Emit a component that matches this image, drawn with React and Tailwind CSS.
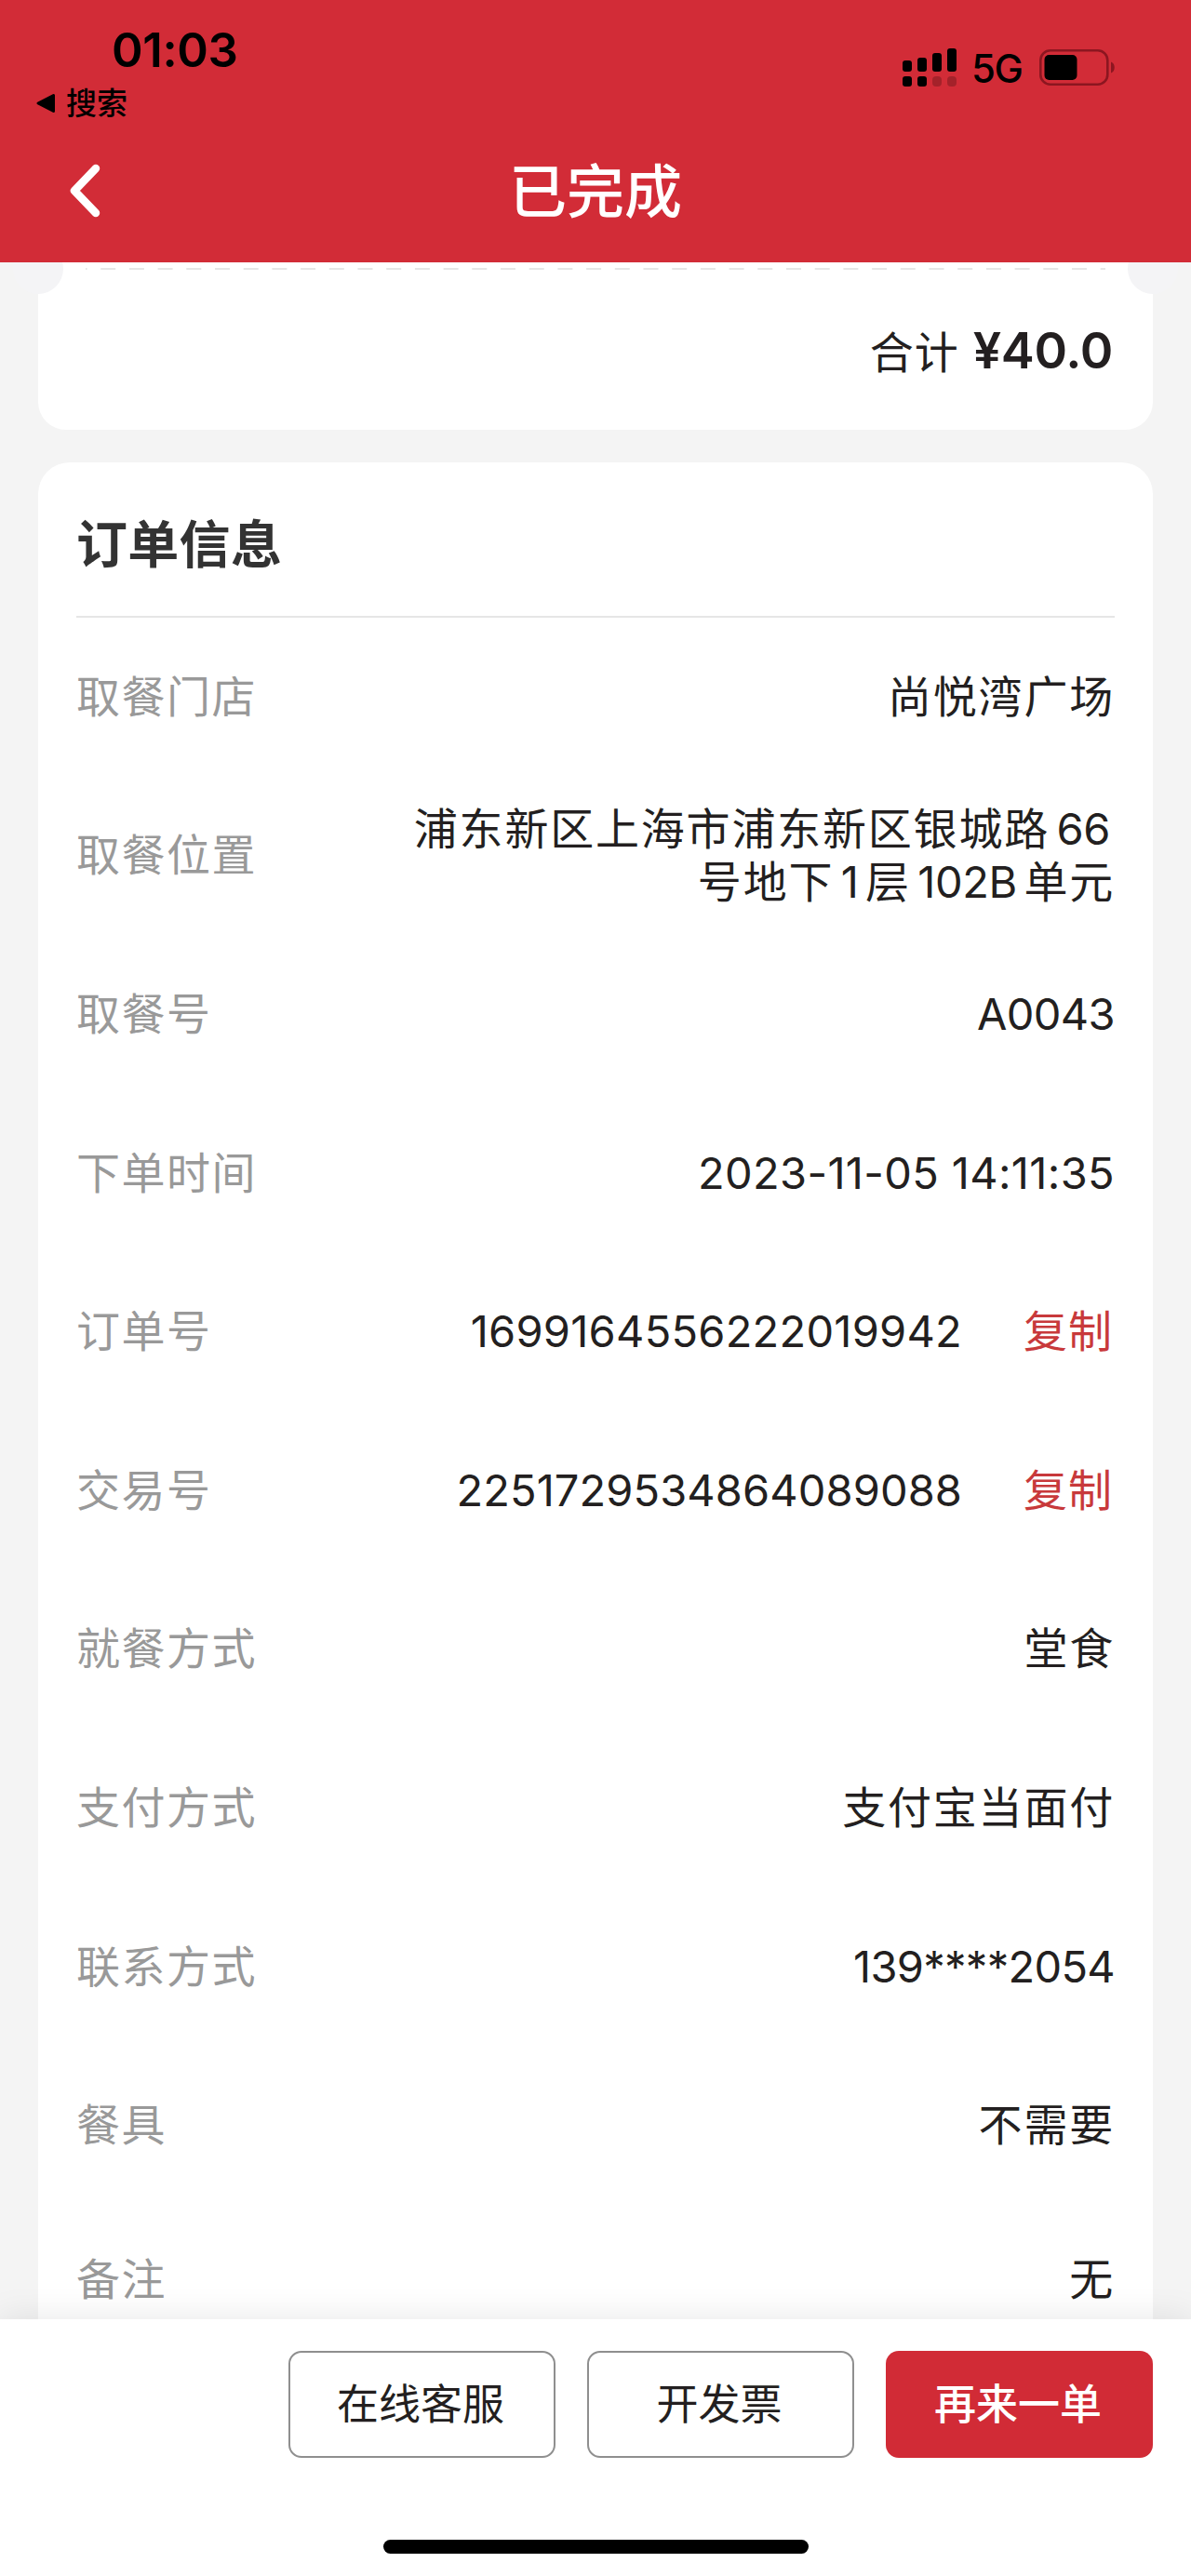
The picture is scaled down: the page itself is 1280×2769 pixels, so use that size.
import React from 'react';
import clsx from 'clsx';

const ORDER_ROWS = [
    { label: '取餐门店', value: '尚悦湾广场' },
    { label: '取餐位置', lines: [['浦东新区上海市浦东新区银城路', '66'], ['号地下', '1', '层', '102B', '单元']] },
    { label: '取餐号', value: 'A0043', tracking: 'tracking-[-0.6px]' },
    { label: '下单时间', value: '2023-11-05 14:11:35', tracking: 'tracking-[0.35px]' },
    { label: '订单号', value: '1699164556222019942', tracking: 'tracking-[0.25px]', copy: true },
    { label: '交易号', value: '2251729534864089088', tracking: 'tracking-[0.1px]', copy: true },
    { label: '就餐方式', value: '堂食' },
    { label: '支付方式', value: '支付宝当面付' },
    { label: '联系方式', value: '139****2054', tracking: 'tracking-[-0.7px]' },
    { label: '餐具', value: '不需要' },
    { label: '备注', value: '无' },
];

const isLatin = (text) => /^[\x20-\x7e]+$/.test(text);

function SignalIcon() {
    return (
        <svg width="58" height="41" viewBox="0 0 58 41" className="block">
            <rect x="0" y="13" width="10" height="12" rx="3" />
            <rect x="16" y="10" width="10" height="15" rx="3" />
            <rect x="32" y="5" width="10" height="20" rx="3" />
            <rect x="48" y="0" width="10" height="25" rx="3" />
            <rect x="0" y="30" width="10" height="11" rx="3" />
            <rect x="16" y="30" width="10" height="11" rx="3" />
            <rect x="32" y="30" width="10" height="11" rx="4" opacity="0.22" />
            <rect x="48" y="30" width="10" height="11" rx="4" opacity="0.22" />
        </svg>
    );
}

function BatteryIcon() {
    return (
        <svg width="82" height="39" viewBox="0 0 82 39" className="block">
            <rect x="1.3" y="1.3" width="72" height="36.4" rx="10.5" fill="none" stroke="#8c1620" strokeWidth="2.6" />
            <rect x="5.5" y="6" width="35" height="27" rx="5" />
            <path d="M77 13.5c5 1.5 5 10.5 0 12z" fill="#8c1620" />
        </svg>
    );
}

function Header() {
    return (
        <header className="h-[282px] shrink-0 bg-[#d22c37] text-black">
            <div className="flex h-[140px] justify-between pl-[38px] pr-[81px]">
                <div className="pt-[23px]">
                    <div className="pl-[82px] text-[51px] leading-[62px] font-semibold tracking-[-0.4px]">01:03</div>
                    <div className="mt-[5px] flex items-center gap-[11px]">
                        <svg width="22" height="22" viewBox="0 0 22 22">
                            <path d="M3 11 19.5 2.5v17z" stroke="#000" strokeWidth="3" strokeLinejoin="round" />
                        </svg>
                        <span className="text-[33px] leading-[42px] font-medium">搜索</span>
                    </div>
                </div>
                <div className="flex h-[41px] items-center mt-[52px]">
                    <SignalIcon />
                    <span className="ml-[16px] w-[73px] text-[42px] leading-[41px] font-medium tracking-[-1.5px] pt-[2px]">5G</span>
                    <BatteryIcon />
                </div>
            </div>
            <div className="grid h-[130px] grid-cols-[1fr_auto_1fr] items-center px-[74px] text-white">
                <svg width="36" height="58" viewBox="0 0 36 58" fill="none">
                    <path d="M29 5 6 29l23 24" stroke="currentColor" strokeWidth="8.5" strokeLinecap="round" strokeLinejoin="round" />
                </svg>
                <h1 className="pt-[4px] text-[62px] leading-[80px] font-medium">已完成</h1>
            </div>
        </header>
    );
}

function TotalCard() {
    return (
        <section className="relative h-[180px] rounded-b-[30px] bg-white">
            {/* ticket notches over the card edges */}
            <span className="absolute -left-[27px] -top-[20px] size-[54px] rounded-full bg-[#f4f4f6]" />
            <span className="absolute -right-[27px] -top-[20px] size-[54px] rounded-full bg-[#f4f4f6]" />
            <svg width="1096" height="2" className="mx-auto block translate-y-[6px]">
                <line x1="0" y1="1" x2="1096" y2="1" stroke="#e6e6e6" strokeWidth="2" strokeDasharray="16 14.7" strokeDashoffset="14.5" />
            </svg>
            <div className="flex items-baseline justify-end gap-[15px] pr-[43px] pt-[58px] text-[#231f20]">
                <span className="text-[47px] leading-[70px] tracking-[1px]">合计</span>
                <span className="text-[54px] leading-[70px] font-semibold tracking-[-0.3px]">¥40.0</span>
            </div>
        </section>
    );
}

function MixedLine({ parts }) {
    return (
        <span className="flex justify-end">
            {parts.map((part, i) => (
                <span key={i} className={clsx(isLatin(part) ? 'mx-[7.5px] last:mr-[5px] tracking-[-0.4px]' : 'tracking-[1.8px]')}>
                    {part}
                </span>
            ))}
        </span>
    );
}

function OrderRow({ row }) {
    return (
        <div className="flex h-[170.6px] items-center justify-between text-[47px] leading-[57px] last:h-[162px]">
            <span className="tracking-[1.5px] text-[#999]">{row.label}</span>
            <div className="flex items-center text-[#231f20]">
                {row.lines ? (
                    <div>
                        {row.lines.map((parts, i) => (
                            <MixedLine key={i} parts={parts} />
                        ))}
                    </div>
                ) : (
                    <span className={row.tracking || 'tracking-[1.8px]'}>{row.value}</span>
                )}
                {row.copy && <button className="ml-[66px] mr-[2px] tracking-[1px] text-[#c8393b]">复制</button>}
            </div>
        </div>
    );
}

function OrderCard() {
    return (
        <section className="mt-[35px] h-[2100px] rounded-t-[34px] bg-white px-[41px]">
            <h2 className="flex h-[167px] items-center border-b-2 border-[#e6e6e6] pt-[11px] text-[55px] font-bold tracking-[0.3px] text-[#333]">
                订单信息
            </h2>
            <div className="-mt-[1px]">
                {ORDER_ROWS.map((row) => (
                    <OrderRow key={row.label} row={row} />
                ))}
            </div>
        </section>
    );
}

function Footer() {
    const base = 'h-[115px] w-[287px] rounded-[14px] pr-[3px] text-[45px] leading-[60px]';
    return (
        <footer className="relative flex h-[276px] shrink-0 flex-col items-center justify-between bg-white pt-[34px] pb-[24px] shadow-[0_0_36px_rgba(0,0,0,0.1)]">
            <div className="flex w-full justify-end gap-[34px] pr-[41px]">
                <button className={clsx(base, 'border-2 border-[#8f8f8f] text-[#231f20]')}>在线客服</button>
                <button className={clsx(base, 'border-2 border-[#8f8f8f] text-[#231f20]')}>开发票</button>
                <button className={clsx(base, 'bg-[#d12b36] font-medium text-white')}>再来一单</button>
            </div>
            <div className="h-[15px] w-[457px] rounded-full bg-black" />
        </footer>
    );
}

export default function App() {
    return (
        <div className="flex h-[2769px] w-[1280px] flex-col overflow-hidden bg-[#f4f4f4] font-['Inter','Noto_Sans_CJK_SC',sans-serif]">
            <Header />
            <main className="min-h-0 flex-1 overflow-hidden px-[41px]">
                <TotalCard />
                <OrderCard />
            </main>
            <Footer />
        </div>
    );
}
